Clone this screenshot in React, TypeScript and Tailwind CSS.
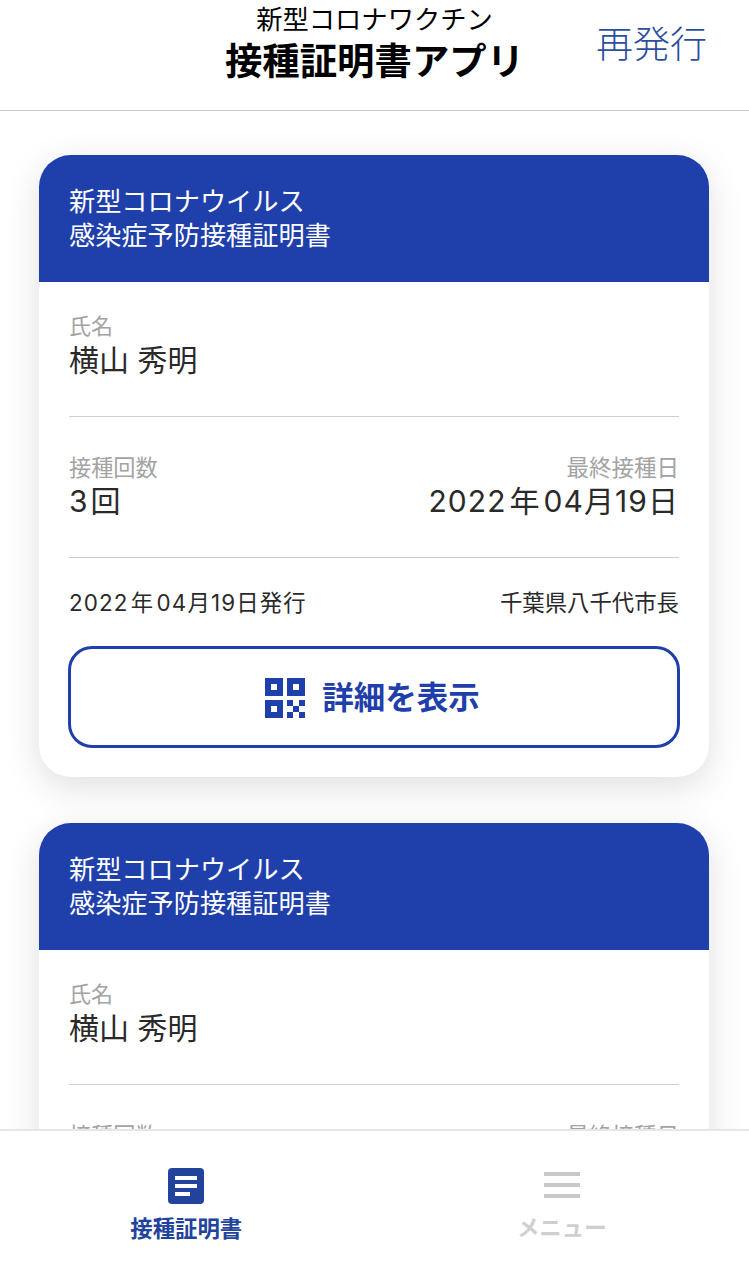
function QrIcon() {
  return (
    <svg width="40" height="40" viewBox="0 0 40 40" fill="#1e40aa">
      <path fillRule="evenodd" d="M0 0h18v18H0zM6 6v6h6V6z" />
      <path fillRule="evenodd" d="M22 0h18v18H22zM28 6v6h6V6z" />
      <path fillRule="evenodd" d="M0 22h18v18H0zM6 28v6h6v-6z" />
      <path d="M22 22h6v6h-6zM34 22h6v6h-6zM28 28h6v6h-6zM22 34h6v6h-6zM34 34h6v6h-6z" />
    </svg>
  );
}

function DocIcon() {
  return (
    <svg width="36" height="36" viewBox="0 0 36 36">
      <rect width="36" height="36" rx="4" fill="#22439b" />
      <path d="M7 8h22v4H7zM7 16h22v4H7zM7 24h15v4H7z" fill="#fff" />
    </svg>
  );
}

function MenuIcon() {
  return (
    <svg width="36" height="26" viewBox="0 0 36 26" fill="#c8c8c8">
      <path d="M0 0h36v4H0zM0 11h36v4H0zM0 22h36v4H0z" />
    </svg>
  );
}

function IssuedDate() {
  return (
    <>
      2022<span className="mx-[0.1em]">年</span>04月19日
    </>
  );
}

function Card() {
  return (
    <div className="w-[670px] shrink-0 bg-white rounded-[32px] overflow-hidden shadow-[0_10px_36px_rgba(0,0,0,0.13)]">
      <div className="h-[127px] bg-[#1f40aa] px-[30px] pt-[30px] text-white text-[26.2px] leading-[34px]">
        <div>新型コロナウイルス</div>
        <div>感染症予防接種証明書</div>
      </div>
      <div className="px-[30px]">
        <div className="h-[135px] pt-[33px] border-b border-[#cfcfcf]">
          <div className="text-[22px] leading-[22px] text-[#a3a3a3]">氏名</div>
          <div className="mt-[5px] text-[30px] leading-[36px] text-[#2a2a2a]">横山 秀明</div>
        </div>
        <div className="h-[141px] pt-[40px] flex justify-between border-b border-[#cfcfcf]">
          <div>
            <div className="text-[22.2px] leading-[22px] text-[#a3a3a3]">接種回数</div>
            <div className="mt-[2px] text-[30px] leading-[40px] tracking-[0.1em] text-[#2a2a2a]">3回</div>
          </div>
          <div className="text-right">
            <div className="text-[22.5px] leading-[22px] text-[#a3a3a3]">最終接種日</div>
            <div className="mt-[2px] text-[30px] leading-[40px] tracking-[0.035em] text-[#2a2a2a]">
              <IssuedDate />
            </div>
          </div>
        </div>
        <div className="h-[88px] pt-[1px] flex justify-between items-center text-[22.4px] text-[#2a2a2a]">
          <div className="tracking-[0.05em]">
            <IssuedDate />
            発行
          </div>
          <div>千葉県八千代市長</div>
        </div>
      </div>
      <div className="px-[29px] pb-[29px]">
        <div className="h-[102px] pr-[3px] pt-[1px] rounded-[24px] border-[3px] border-[#1f40aa] flex items-center justify-center gap-[17px]">
          <QrIcon />
          <span className="text-[31.5px] font-bold text-[#1f40aa]">詳細を表示</span>
        </div>
      </div>
    </div>
  );
}

export default function App() {
  return (
    <div className="h-[1288px] w-[749px] flex flex-col overflow-hidden bg-white font-['Inter','Noto_Sans_CJK_JP',sans-serif]">
      <header className="h-[111px] shrink-0 border-b border-[#cccccc] grid grid-cols-[1fr_auto_1fr] bg-white">
        <div />
        <div className="flex flex-col items-center">
          <div className="mt-[3px] text-[26.3px] leading-[34px] text-black">新型コロナワクチン</div>
          <div className="mt-[2px] text-[37.4px] leading-[46px] font-bold text-black">接種証明書アプリ</div>
        </div>
        <div className="flex justify-end pr-[42px] pt-[20px]">
          <span className="text-[37px] leading-[50px] font-light text-[#2b4e9f]">再発行</span>
        </div>
      </header>

      <main className="flex-1 overflow-hidden bg-white px-[39px] pt-[44px] flex flex-col gap-[46px]">
        <Card />
        <Card />
      </main>

      <nav className="h-[159px] shrink-0 border-t-2 border-[#e6e6e6] bg-white grid grid-cols-2">
        <div className="flex flex-col items-center pt-[37px] pr-[2px]">
          <DocIcon />
          <span className="mt-[9px] text-[22.4px] leading-[32px] font-bold text-[#22439b]">接種証明書</span>
        </div>
        <div className="flex flex-col items-center pt-[41px]">
          <MenuIcon />
          <span className="mt-[14px] text-[22.4px] leading-[32px] font-bold text-[#cfcfcf]">メニュー</span>
        </div>
      </nav>
    </div>
  );
}
